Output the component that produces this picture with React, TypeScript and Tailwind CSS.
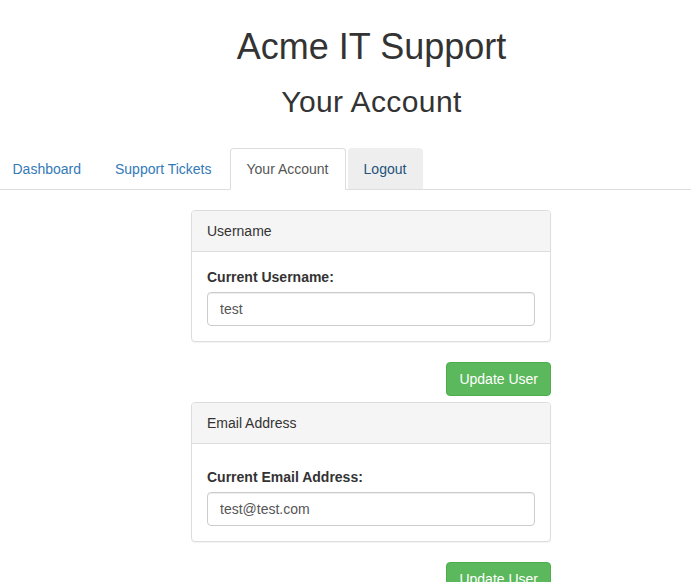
import React from 'react';

const tabs = [
    { label: 'Dashboard', state: 'link', width: '' },
    { label: 'Support Tickets', state: 'link', width: '' },
    { label: 'Your Account', state: 'active', width: 'w-[116px]' },
    { label: 'Logout', state: 'hover', width: 'w-[75px]' },
];

interface PanelProps {
    title: string;
    label: string;
    value: string;
    first?: boolean;
}

const AccountPanel: React.FC<PanelProps> = ({ title, label, value, first }) => (
    <div className={first ? '' : 'mt-[6px]'}>
        <div className="rounded-[4px] border border-[#ddd] bg-white shadow-[0_1px_1px_rgba(0,0,0,0.05)]">
            <div className="rounded-t-[3px] border-b border-[#ddd] bg-[#f5f5f5] px-[15px] py-[10px] text-[#333]">
                {title}
            </div>
            <div className={`px-[15px] pb-[15px] ${first ? 'pt-[15px]' : 'pt-[23px]'}`}>
                <label className="mb-[5px] block font-bold">{label}</label>
                <input
                    type="text"
                    defaultValue={value}
                    className="block h-[34px] w-full rounded-[4px] border border-[#ccc] bg-white px-[12px] py-[6px] text-[14px] text-[#555] shadow-[inset_0_1px_1px_rgba(0,0,0,0.075)] outline-none"
                />
            </div>
        </div>
        <div className="mt-[20px] flex justify-end">
            <button className="rounded-[4px] border border-[#4cae4c] bg-[#5cb85c] px-[12px] py-[6px] text-[14px] leading-[20px] text-white">
                Update User
            </button>
        </div>
    </div>
);

const App: React.FC = () => {
    return (
        <div className="min-h-screen overflow-hidden bg-white font-['Liberation_Sans',Arial,sans-serif] text-[14px] leading-[20px] text-[#333]">
            <div className="ml-[-3.5px] w-[750px]">
                <h1 className="pt-[27px] text-center text-[36px] leading-[39.6px]">Acme IT Support</h1>
                <h2 className="mt-[18px] text-center text-[30px] leading-[33px] tracking-[0.4px]">Your Account</h2>

                <ul className="mt-[30px] flex border-b border-[#ddd]">
                    {tabs.map((tab) => (
                        <li key={tab.label} className="-mb-px mr-[2px]">
                            <a
                                href="#"
                                className={`block rounded-t-[4px] border px-[15px] py-[10px] text-center leading-[20px] ${tab.width} ${
                                    tab.state === 'active'
                                        ? 'border-[#ddd] border-b-transparent bg-white text-[#555]'
                                        : tab.state === 'hover'
                                        ? 'border-[#eee] border-b-[#ddd] bg-[#eee] text-[#23527c]'
                                        : 'border-transparent text-[#337ab7]'
                                }`}
                            >
                                {tab.label}
                            </a>
                        </li>
                    ))}
                </ul>

                <div className="ml-[194.5px] mt-[20px] w-[360px]">
                    <AccountPanel first title="Username" label="Current Username:" value="test" />
                    <AccountPanel title="Email Address" label="Current Email Address:" value="test@test.com" />
                </div>
            </div>
        </div>
    );
};

export default App;
